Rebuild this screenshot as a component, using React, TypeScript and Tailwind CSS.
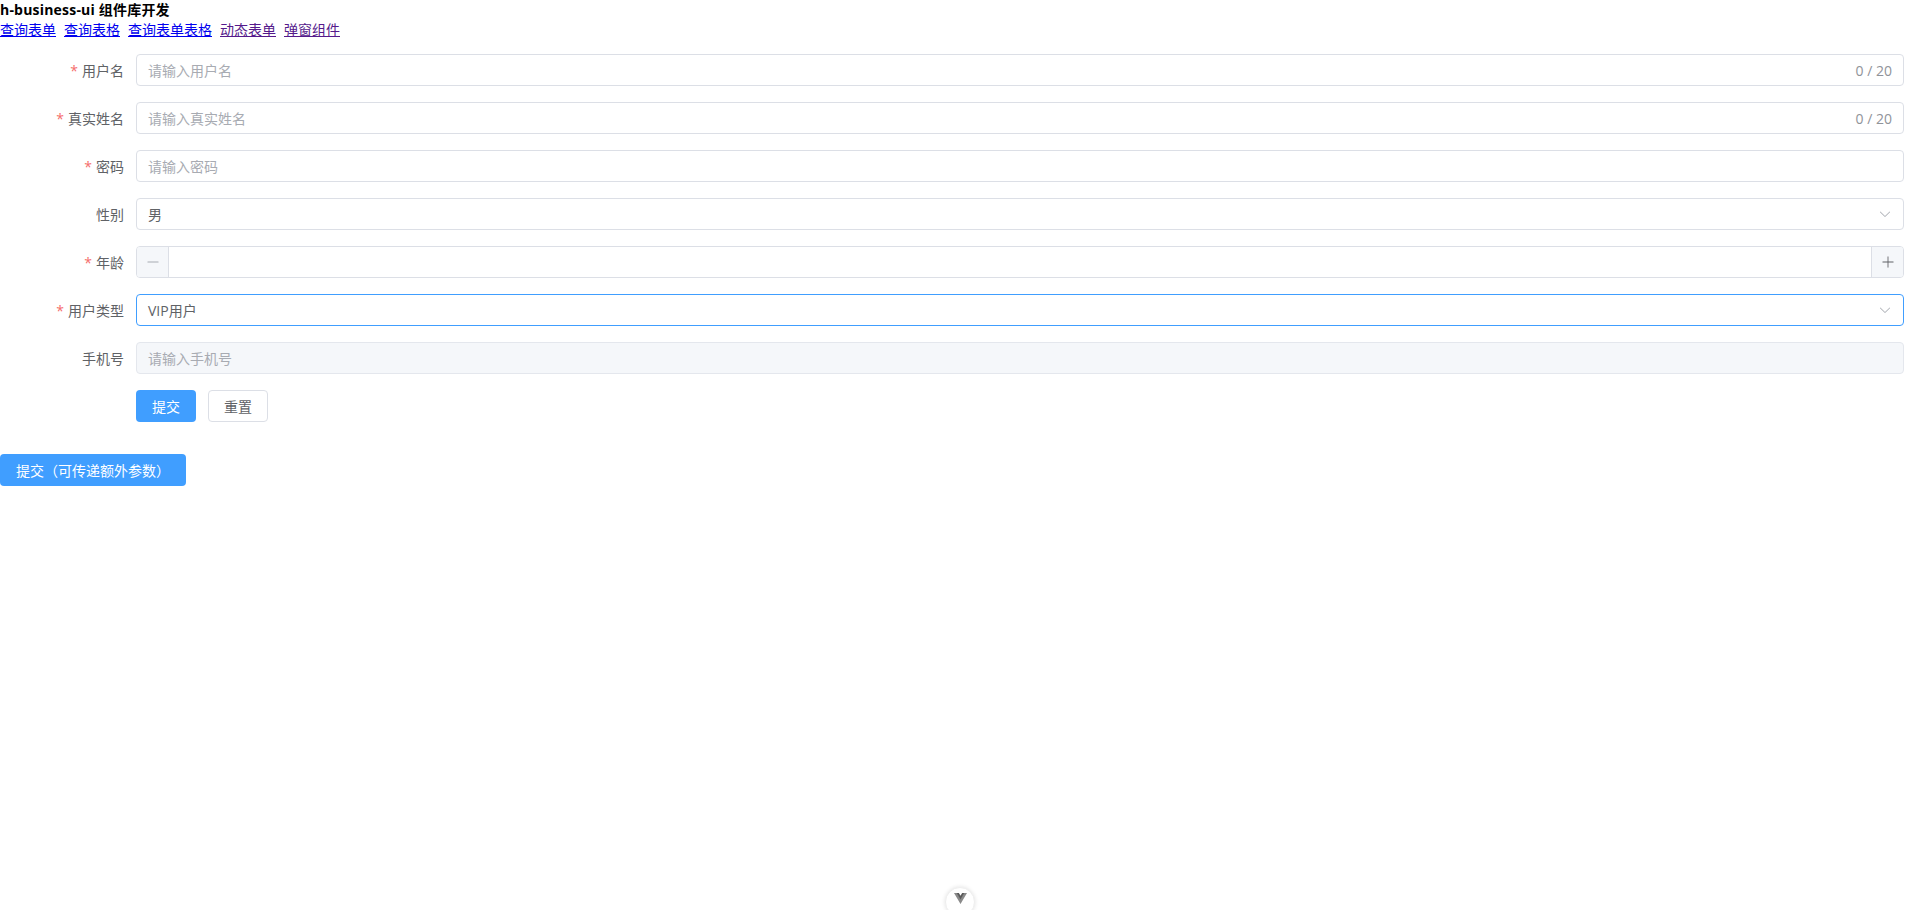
const ArrowDown = () => (
  <svg viewBox="0 0 1024 1024" className="w-[14px] h-[14px]" fill="#a8abb2">
    <path d="M831.872 340.864 512 652.672 192.128 340.864a30.592 30.592 0 0 0-42.752 0 29.12 29.12 0 0 0 0 41.6L489.664 714.24a32 32 0 0 0 44.672 0l340.288-331.712a29.12 29.12 0 0 0 0-41.728 30.592 30.592 0 0 0-42.752 0z" />
  </svg>
)

const Minus = () => (
  <svg viewBox="0 0 1024 1024" className="w-[14px] h-[14px]" fill="#a8abb2">
    <path d="M128 544h768a32 32 0 1 0 0-64H128a32 32 0 0 0 0 64z" />
  </svg>
)

const Plus = () => (
  <svg viewBox="0 0 1024 1024" className="w-[14px] h-[14px]" fill="#606266">
    <path d="M480 480V128a32 32 0 0 1 64 0v352h352a32 32 0 1 1 0 64H544v352a32 32 0 1 1-64 0V544H128a32 32 0 0 1 0-64h352z" />
  </svg>
)

function FormItem({ label, required, children }: { label: string; required?: boolean; children: React.ReactNode }) {
  return (
    <div className="flex items-center h-8 mb-4">
      <label className="w-[136px] shrink-0 pr-3 text-right text-[14px] text-[#606266]">
        {required && <span className="text-[#f56c6c] mr-1">*</span>}
        {label}
      </label>
      <div className="flex-1 h-8">{children}</div>
    </div>
  )
}

function TextInput({ placeholder, count, disabled }: { placeholder: string; count?: boolean; disabled?: boolean }) {
  return (
    <div
      className={
        disabled
          ? "h-8 flex items-center px-[11px] rounded border border-[#e4e7ed] bg-[#f5f7fa]"
          : "h-8 flex items-center px-[11px] rounded border border-[#dcdfe6] bg-white"
      }
    >
      <span className="flex-1 text-[14px] text-[#a8abb2]">{placeholder}</span>
      {count && <span className="text-[14px] text-[#909399]">0 / 20</span>}
    </div>
  )
}

function Select({ value, focused }: { value: string; focused?: boolean }) {
  return (
    <div
      className={
        focused
          ? "h-8 flex items-center px-[11px] rounded border border-[#409eff] bg-white"
          : "h-8 flex items-center px-[11px] rounded border border-[#dcdfe6] bg-white"
      }
    >
      <span className="flex-1 text-[14px] text-[#606266]">{value}</span>
      <ArrowDown />
    </div>
  )
}

export default function App() {
  return (
    <div className="min-h-screen bg-white font-['Open_Sans','Noto_Sans_CJK_SC',sans-serif]">
      {/* Header */}
      <div className="text-[14px] font-bold leading-5 text-black tracking-[0.2px]">h-business-ui 组件库开发</div>
      <div className="flex gap-2 text-[14px] leading-5">
        <a href="#" className="underline text-[#0000ee]">查询表单</a>
        <a href="#" className="underline text-[#0000ee]">查询表格</a>
        <a href="#" className="underline text-[#0000ee]">查询表单表格</a>
        <a href="#" className="underline text-[#551a8b]">动态表单</a>
        <a href="#" className="underline text-[#551a8b]">弹窗组件</a>
      </div>

      {/* Form */}
      <form className="mt-[14px] pr-4">
        <FormItem label="用户名" required>
          <TextInput placeholder="请输入用户名" count />
        </FormItem>
        <FormItem label="真实姓名" required>
          <TextInput placeholder="请输入真实姓名" count />
        </FormItem>
        <FormItem label="密码" required>
          <TextInput placeholder="请输入密码" />
        </FormItem>
        <FormItem label="性别">
          <Select value="男" />
        </FormItem>
        <FormItem label="年龄" required>
          <div className="h-8 flex rounded border border-[#dcdfe6] bg-white overflow-hidden">
            <div className="w-8 flex items-center justify-center bg-[#f5f7fa] border-r border-[#dcdfe6]">
              <Minus />
            </div>
            <div className="flex-1" />
            <div className="w-8 flex items-center justify-center bg-[#f5f7fa] border-l border-[#dcdfe6]">
              <Plus />
            </div>
          </div>
        </FormItem>
        <FormItem label="用户类型" required>
          <Select value="VIP用户" focused />
        </FormItem>
        <FormItem label="手机号">
          <TextInput placeholder="请输入手机号" disabled />
        </FormItem>
        <div className="flex items-center h-8 mb-8 pl-[136px] gap-3">
          <button type="button" className="h-8 w-[60px] rounded bg-[#409eff] text-white text-[14px]">提交</button>
          <button type="button" className="h-8 w-[60px] rounded border border-[#dcdfe6] bg-white text-[#606266] text-[14px]">重置</button>
        </div>
      </form>

      <button type="button" className="h-8 w-[186px] rounded bg-[#409eff] text-white text-[14px]">
        提交（可传递额外参数）
      </button>

      {/* devtools toggle */}
      <div className="fixed top-[887px] left-[945px] w-[30px] h-[30px] rounded-full bg-white shadow-[0_0_4px_rgba(0,0,0,0.12)] border border-[#eeeeee] flex justify-center pt-[5px]">
        <svg viewBox="0 0 24 20" className="w-[13px] h-[11px]">
          <path d="M0 0h6l6 10 6-10h6L12 20z" fill="#8a8a8a" />
          <path d="M5 0h4l3 5 3-5h4l-7 12z" fill="#5a5a5a" />
        </svg>
      </div>
    </div>
  )
}
